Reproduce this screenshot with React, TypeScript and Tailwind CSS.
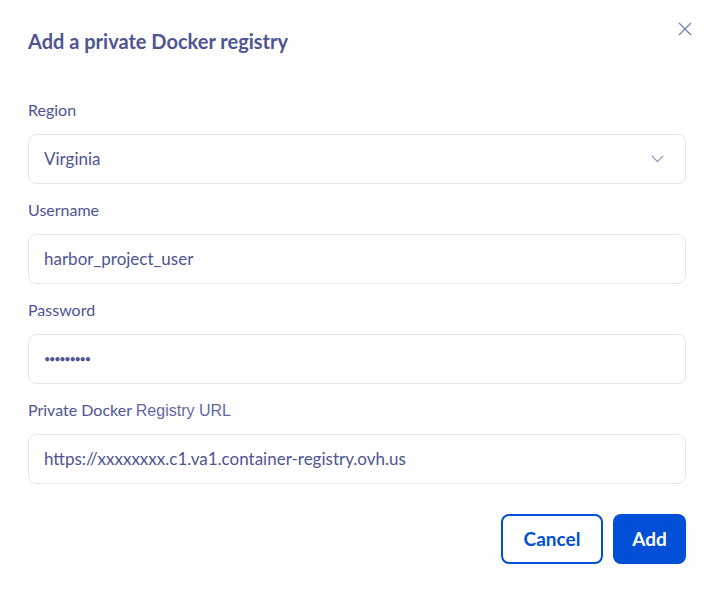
import React from "react";

const Field = ({ label, children }: { label: React.ReactNode; children: React.ReactNode }) => (
  <div className="flex flex-col">
    <label className="h-6 text-[16px] leading-6">{label}</label>
    <div className="mt-3 flex h-[50px] items-center rounded-lg border border-[#e6e6e6] bg-white pl-[15px] pr-5 text-[17px]">
      {children}
    </div>
  </div>
);

export default function App() {
  return (
    <div className="h-[590px] w-[714px] bg-white px-7 pt-[27px] text-[#4d5592]" style={{ fontFamily: "Lato, 'Noto Sans', sans-serif" }}>
      <div className="flex items-start justify-between">
        <h2 className="h-7 text-[20px] font-bold leading-7">Add a private Docker registry</h2>
        <button className="-mr-[6px] -mt-[5px] text-[#7b82b5]" aria-label="Close">
          <svg width="14" height="14" viewBox="0 0 14 14" fill="none" stroke="currentColor" strokeWidth="1.4">
            <path d="M1 1 13 13M13 1 1 13" />
          </svg>
        </button>
      </div>

      <div className="mt-[43px] flex flex-col gap-[14px]">
        <Field label="Region">
          <span className="flex-1">Virginia</span>
          <svg width="13" height="8" viewBox="0 0 13 8" fill="none" stroke="#9a9fca" strokeWidth="1.3" className="mr-[1px]">
            <path d="M1 1 6.5 6.5 12 1" />
          </svg>
        </Field>
        <Field label="Username">harbor_project_user</Field>
        <Field label="Password">
          <span className="text-[11px] tracking-[-1.3px]">•••••••••</span>
        </Field>
        <Field
          label={
            <>
              Private Docker{" "}
              <span className="text-[#5f69a6]" style={{ fontFamily: "'Liberation Sans', Arial, sans-serif" }}>
                Registry URL
              </span>
            </>
          }
        >
          https://xxxxxxxx.c1.va1.container-registry.ovh.us
        </Field>
      </div>

      <div className="mt-[30px] flex justify-end gap-[10px]">
        <button className="h-[50px] w-[102px] rounded-lg border-2 border-[#0050d7] bg-white text-[19px] font-bold text-[#0050d7]">
          Cancel
        </button>
        <button className="h-[50px] w-[73px] rounded-lg bg-[#0050d7] text-[19px] font-bold text-white">Add</button>
      </div>
    </div>
  );
}
